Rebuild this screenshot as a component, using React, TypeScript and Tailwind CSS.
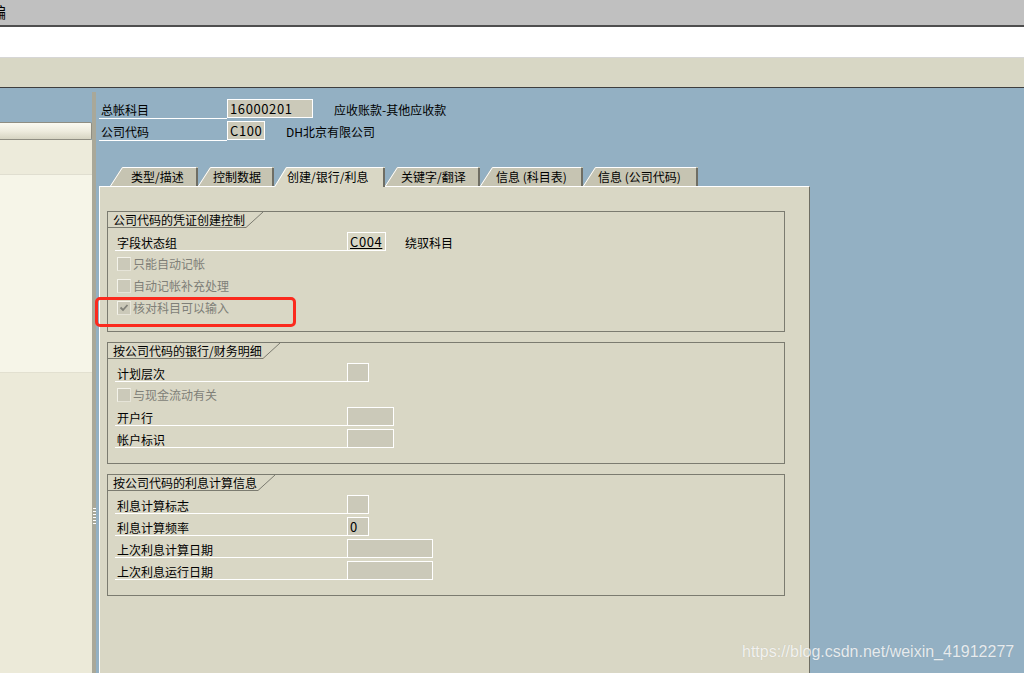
import React from "react";

type TabDef = { label: string; w: string; pl: string; width: number; active?: boolean };

const tabs: TabDef[] = [
  { label: "类型/描述", w: "w-[88px]", pl: "pl-[21px]", width: 88 },
  { label: "控制数据", w: "w-[76px]", pl: "pl-[15px]", width: 76 },
  { label: "创建/银行/利息", w: "w-[111px]", pl: "pl-[13px]", width: 111, active: true },
  { label: "关键字/翻译", w: "w-[95px]", pl: "pl-[16px]", width: 95 },
  { label: "信息 (科目表)", w: "w-[103px]", pl: "pl-[16px]", width: 103 },
  { label: "信息 (公司代码)", w: "w-[115px]", pl: "pl-[15px]", width: 115 },
];

function Tab({ t }: { t: TabDef }) {
  const h = t.active ? 20 : 19;
  const w = t.width;
  const fill = t.active ? "#d9d7c5" : "#c6c4b2";
  return (
    <div
      className={`relative shrink-0 flex items-center ${t.w} ${t.pl} ${
        t.active ? "h-[20px] -mb-[1px] z-10" : "h-[19px]"
      }`}
    >
      <svg
        className="absolute inset-0 w-full h-full"
        viewBox={`0 0 ${w} ${h}`}
        preserveAspectRatio="none"
      >
        <polygon points={`0,${h} 12,0 ${w},0 ${w},${h}`} fill={fill} />
        <polyline
          points={`0.5,${h} 12.5,0.5 ${w - 2},0.5`}
          fill="none"
          stroke="#ffffff"
          strokeWidth="1"
        />
        <line x1={w - 1} y1="1" x2={w - 1} y2={h} stroke="#6f6e64" strokeWidth="2" />
      </svg>
      <span className="relative leading-none">{t.label}</span>
    </div>
  );
}

function Group({
  title,
  pb,
  children,
}: {
  title: string;
  pb: string;
  children: React.ReactNode;
}) {
  return (
    <div className={`w-[678px] border border-[#7b7b70] ${pb}`}>
      <div className="flex h-[16px]">
        <div className="border-b border-[#7b7b70] pl-[5px] pr-[1px] flex items-center leading-none">
          {title}
        </div>
        <svg width="17" height="16" className="block shrink-0">
          <line x1="0" y1="15.5" x2="17" y2="0" stroke="#7b7b70" strokeWidth="1" />
        </svg>
      </div>
      <div className="pt-[1px] pl-[7px]">{children}</div>
    </div>
  );
}

function FieldRow({ label, children }: { label: string; children?: React.ReactNode }) {
  return (
    <div className="flex h-[22px] items-end">
      <div className="w-[232px] h-full border-b border-white pl-[2px] pt-[6px] flex items-center leading-none">
        {label}
      </div>
      {children}
    </div>
  );
}

const valueFont = "font-['Noto_Sans_CJK_SC',sans-serif] text-[13px] tracking-[0.6px]";

function Box({ w, children }: { w: string; children?: React.ReactNode }) {
  return (
    <div
      className={`${w} h-[19px] border border-white bg-[#cbc9b9] pl-[2px] flex items-center ${valueFont} leading-none`}
    >
      {children}
    </div>
  );
}

function CheckRow({ label, checked }: { label: string; checked?: boolean }) {
  return (
    <div className="flex h-[22px] items-center pt-[3px] pl-[2px] gap-[2px]">
      <div className="w-[14px] h-[14px] border border-t-[#f4f3ea] border-l-[#f4f3ea] border-r-[#e6e4d8] border-b-[#e6e4d8] bg-[#cbc9b9] flex items-center justify-center">
        {checked && (
          <svg width="10" height="10" viewBox="0 0 10 10">
            <path d="M1.5 4.5 L4 7 L8.5 2" fill="none" stroke="#808078" strokeWidth="1.8" />
          </svg>
        )}
      </div>
      <span className="text-[#7f7f78] leading-none">{label}</span>
    </div>
  );
}

export default function App() {
  return (
    <div className="relative w-[1024px] h-[673px] overflow-hidden flex flex-col bg-[#93b0c3] text-[12px] text-black font-['Noto_Sans_CJK_SC',sans-serif]">
      {/* title bar */}
      <div className="h-[25px] shrink-0 bg-[#c0c0c0] overflow-hidden">
        <span className="block -ml-[9px] mt-[2px] text-[15px] leading-[20px]">编</span>
      </div>
      <div className="h-[2px] shrink-0 bg-[#4e4e4e]" />
      <div className="h-[31px] shrink-0 bg-white border-b border-[#d6d6d6]" />
      <div className="h-[30px] shrink-0 bg-[#d8d7c5] border-b border-[#3e3e3e]" />

      <div className="flex-1 flex min-h-0">
        {/* left navigation panel */}
        <div className="w-[92px] shrink-0 flex flex-col">
          <div className="h-[34px] shrink-0" />
          <div className="h-[18px] shrink-0 border-y border-r border-[#8f8e82] rounded-r-[2px] bg-linear-to-b from-[#fbfaf1] via-[#eeecde] to-[#d6d4c2]" />
          <div className="h-[35px] shrink-0 bg-[#edebdb] border-b border-[#e0ded0]" />
          <div className="h-[198px] shrink-0 bg-[#f6f5e8] border-b border-[#e2e0d0]" />
          <div className="flex-1 bg-[#ecead9]" />
        </div>

        {/* splitter */}
        <div className="w-[4px] shrink-0 flex flex-col">
          <div className="h-[4px] shrink-0" />
          <div className="flex-1 bg-[#a9a899] flex flex-col items-center pt-[416px] gap-[2px]">
            <div className="w-[3px] h-[1px] bg-white" />
            <div className="w-[3px] h-[1px] bg-white" />
            <div className="w-[3px] h-[1px] bg-white" />
            <div className="w-[3px] h-[1px] bg-white" />
            <div className="w-[3px] h-[1px] bg-white" />
            <div className="w-[3px] h-[1px] bg-white" />
          </div>
        </div>
        <div className="w-[3px] shrink-0" />

        {/* content */}
        <div className="flex-1 flex flex-col min-w-0 pt-[11px]">
          <div className="flex h-[20px] shrink-0">
            <div className="w-[128px] border-b border-white pl-[2px] pt-[2px] flex items-center leading-none">
              总帐科目
            </div>
            <Box w="w-[86px]">16000201</Box>
            <div className="ml-[21px] pt-[2px] flex items-center leading-none">应收账款-其他应收款</div>
          </div>
          <div className="flex h-[20px] shrink-0 mt-[2px]">
            <div className="w-[128px] border-b border-white pl-[2px] pt-[2px] flex items-center leading-none">
              公司代码
            </div>
            <Box w="w-[38px]">C100</Box>
            <div className="ml-[21px] pt-[2px] flex items-center leading-none">DH北京有限公司</div>
          </div>

          {/* tabs */}
          <div className="flex items-end h-[19px] shrink-0 mt-[26px] pl-[11px]">
            {tabs.map((t) => (
              <Tab key={t.label} t={t} />
            ))}
          </div>

          {/* tab panel */}
          <div className="w-[711px] flex-1 bg-[#d9d7c5] border-l border-t border-white border-r border-r-[#6e6e64] pl-[7px] pt-[24px] flex flex-col gap-[10px]">
            <Group title="公司代码的凭证创建控制" pb="pb-[14px]">
              <FieldRow label="字段状态组">
                <div
                  className={`w-[39px] h-[19px] border border-white pl-[2px] flex items-center ${valueFont} leading-none underline`}
                >
                  C004
                </div>
                <div className="ml-[19px] h-[19px] pt-[2px] flex items-center leading-none">绕驭科目</div>
              </FieldRow>
              <CheckRow label="只能自动记帐" />
              <CheckRow label="自动记帐补充处理" />
              <CheckRow label="核对科目可以输入" checked />
            </Group>

            <Group title="按公司代码的银行/财务明细" pb="pb-[15px]">
              <FieldRow label="计划层次">
                <Box w="w-[22px]" />
              </FieldRow>
              <CheckRow label="与现金流动有关" />
              <FieldRow label="开户行">
                <Box w="w-[47px]" />
              </FieldRow>
              <FieldRow label="帐户标识">
                <Box w="w-[47px]" />
              </FieldRow>
            </Group>

            <Group title="按公司代码的利息计算信息" pb="pb-[15px]">
              <FieldRow label="利息计算标志">
                <Box w="w-[22px]" />
              </FieldRow>
              <FieldRow label="利息计算频率">
                <Box w="w-[22px]">0</Box>
              </FieldRow>
              <FieldRow label="上次利息计算日期">
                <Box w="w-[86px]" />
              </FieldRow>
              <FieldRow label="上次利息运行日期">
                <Box w="w-[86px]" />
              </FieldRow>
            </Group>
          </div>
        </div>
      </div>

      {/* red annotation */}
      <div className="absolute left-[95px] top-[297px] w-[201px] h-[30px] border-[3px] border-[#fb2a1e] rounded-[5px]" />

      {/* watermark */}
      <div className="absolute left-[742px] top-[642px] text-[16px] leading-[20px] font-['Liberation_Sans',sans-serif] text-white/80 [text-shadow:0_0_1px_rgba(0,0,0,0.15)]">
        https://blog.csdn.net/weixin_41912277
      </div>
    </div>
  );
}
